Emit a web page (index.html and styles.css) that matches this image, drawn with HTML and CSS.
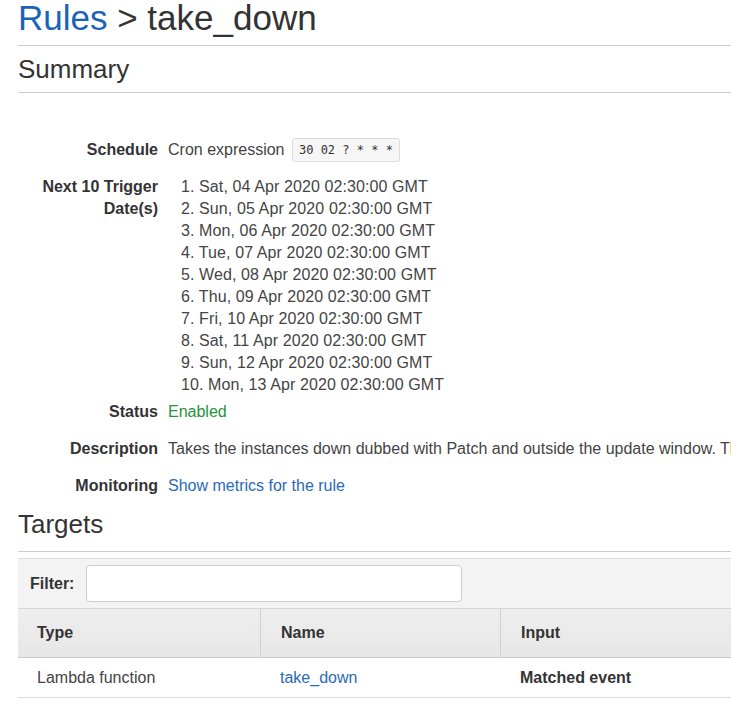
FILE: index.html
```html
<!DOCTYPE html>
<html lang="en">
<head>
<meta charset="utf-8">
<title>Rules &gt; take_down</title>
<link rel="stylesheet" href="styles.css">
</head>
<body>
<div class="page">
  <h1 class="title"><a class="crumb" href="#">Rules</a> &gt; take_down</h1>

  <h2 class="section-title summary-title">Summary</h2>

  <div class="details">
    <div class="row row-schedule">
      <div class="label">Schedule</div>
      <div class="value">Cron expression <code class="cron">30 02 ? * * *</code></div>
    </div>
    <div class="row row-dates">
      <div class="label">Next 10 Trigger Date(s)</div>
      <div class="value">
        <ul class="dates">
          <li>1. Sat, 04 Apr 2020 02:30:00 GMT</li>
          <li>2. Sun, 05 Apr 2020 02:30:00 GMT</li>
          <li>3. Mon, 06 Apr 2020 02:30:00 GMT</li>
          <li>4. Tue, 07 Apr 2020 02:30:00 GMT</li>
          <li>5. Wed, 08 Apr 2020 02:30:00 GMT</li>
          <li>6. Thu, 09 Apr 2020 02:30:00 GMT</li>
          <li>7. Fri, 10 Apr 2020 02:30:00 GMT</li>
          <li>8. Sat, 11 Apr 2020 02:30:00 GMT</li>
          <li>9. Sun, 12 Apr 2020 02:30:00 GMT</li>
          <li>10. Mon, 13 Apr 2020 02:30:00 GMT</li>
        </ul>
      </div>
    </div>
    <div class="row row-status">
      <div class="label">Status</div>
      <div class="value status-enabled">Enabled</div>
    </div>
    <div class="row row-desc">
      <div class="label">Description</div>
      <div class="value nowrap">Takes the instances down dubbed with Patch and outside the update window. They are started again later.</div>
    </div>
    <div class="row row-monitor">
      <div class="label">Monitoring</div>
      <div class="value"><a class="link" href="#">Show metrics for the rule</a></div>
    </div>
  </div>

  <h2 class="section-title targets-title">Targets</h2>

  <div class="table-panel">
    <div class="filter-bar">
      <label class="filter-label" for="filter">Filter:</label>
      <input class="filter-input" id="filter" type="text">
    </div>
    <table class="targets">
      <thead>
        <tr>
          <th class="col-type">Type</th>
          <th class="col-name">Name</th>
          <th class="col-input">Input</th>
        </tr>
      </thead>
      <tbody>
        <tr>
          <td>Lambda function</td>
          <td><a class="link" href="#">take_down</a></td>
          <td class="strong">Matched event</td>
        </tr>
      </tbody>
    </table>
  </div>
</div>
</body>
</html>
```

FILE: styles.css
```css
html, body {
  margin: 0;
  padding: 0;
  overflow: hidden;
  background: #ffffff;
}

body {
  font-family: "Liberation Sans", Arial, sans-serif;
  color: #444444;
  font-size: 16px;
}

.page {
  width: 1000px;
  padding-left: 18px;
}

.title {
  margin: 0;
  font-size: 35px;
  font-weight: normal;
  line-height: 36px;
  color: #333333;
  padding: 0 0 9px 0;
  border-bottom: 1px solid #cccccc;
}

.crumb {
  color: #1a62b8;
  text-decoration: none;
}

.section-title {
  margin: 0;
  font-size: 26px;
  font-weight: normal;
  line-height: 30px;
  color: #333333;
  border-bottom: 1px solid #cccccc;
}

.summary-title {
  margin-top: 8px;
  padding-bottom: 8px;
}

.targets-title {
  margin-top: 12px;
  padding-bottom: 12px;
}

.details {
  padding-top: 46px;
}

.row {
  display: flex;
  line-height: 22px;
}

.label {
  flex: 0 0 150px;
  box-sizing: border-box;
  padding-right: 10px;
  text-align: right;
  font-weight: bold;
  color: #333333;
}

.value {
  color: #444444;
}

.nowrap {
  white-space: nowrap;
}

.cron {
  display: inline-block;
  vertical-align: middle;
  margin: -1px 0 0 3px;
  height: 24px;
  box-sizing: border-box;
  line-height: 22px;
  padding: 0 6px;
  font-family: "DejaVu Sans Mono", "Liberation Mono", monospace;
  font-size: 12px;
  color: #333333;
  background: #f6f6f6;
  border: 1px solid #dddddd;
  border-radius: 3px;
}

.row-dates {
  margin-top: 14px;
}

.dates {
  list-style: none;
  margin: 0;
  padding: 0 0 0 13px;
  letter-spacing: 0.1px;
}

.row-status {
  margin-top: 5px;
}

.row-desc,
.row-monitor {
  margin-top: 15px;
}

.status-enabled {
  color: #23943b;
}

.link {
  color: #2a6ab6;
  text-decoration: none;
}

.table-panel {
  margin-top: 6px;
  width: 740px;
}

.filter-bar {
  display: flex;
  align-items: center;
  padding: 6px 0 6px 12px;
  background: #f3f3f3;
  border-top: 1px solid #dddddd;
  border-bottom: 1px solid #d6d6d6;
}

.filter-label {
  font-weight: bold;
  color: #333333;
  width: 56px;
}

.filter-input {
  box-sizing: border-box;
  width: 376px;
  height: 37px;
  margin: 0;
  border: 1px solid #cccccc;
  border-radius: 4px;
  background: #ffffff;
  font: inherit;
}

.targets {
  width: 100%;
  border-collapse: separate;
  border-spacing: 0;
  table-layout: fixed;
}

.targets th {
  box-sizing: border-box;
  height: 49px;
  padding: 0 0 0 19px;
  text-align: left;
  font-weight: bold;
  color: #333333;
  background: linear-gradient(#eeeeee, #e7e7e7);
  border-bottom: 1px solid #cacaca;
}

.targets th + th {
  border-left: 1px solid #d0d0d0;
  padding-left: 20px;
}

.col-type { width: 242px; }
.col-name { width: 240px; }

.targets td {
  box-sizing: border-box;
  height: 40px;
  padding: 0 0 0 19px;
  border-bottom: 1px solid #dddddd;
  color: #444444;
}

.targets td + td {
  padding-left: 20px;
}

.strong {
  font-weight: bold;
  color: #333333 !important;
}
```
